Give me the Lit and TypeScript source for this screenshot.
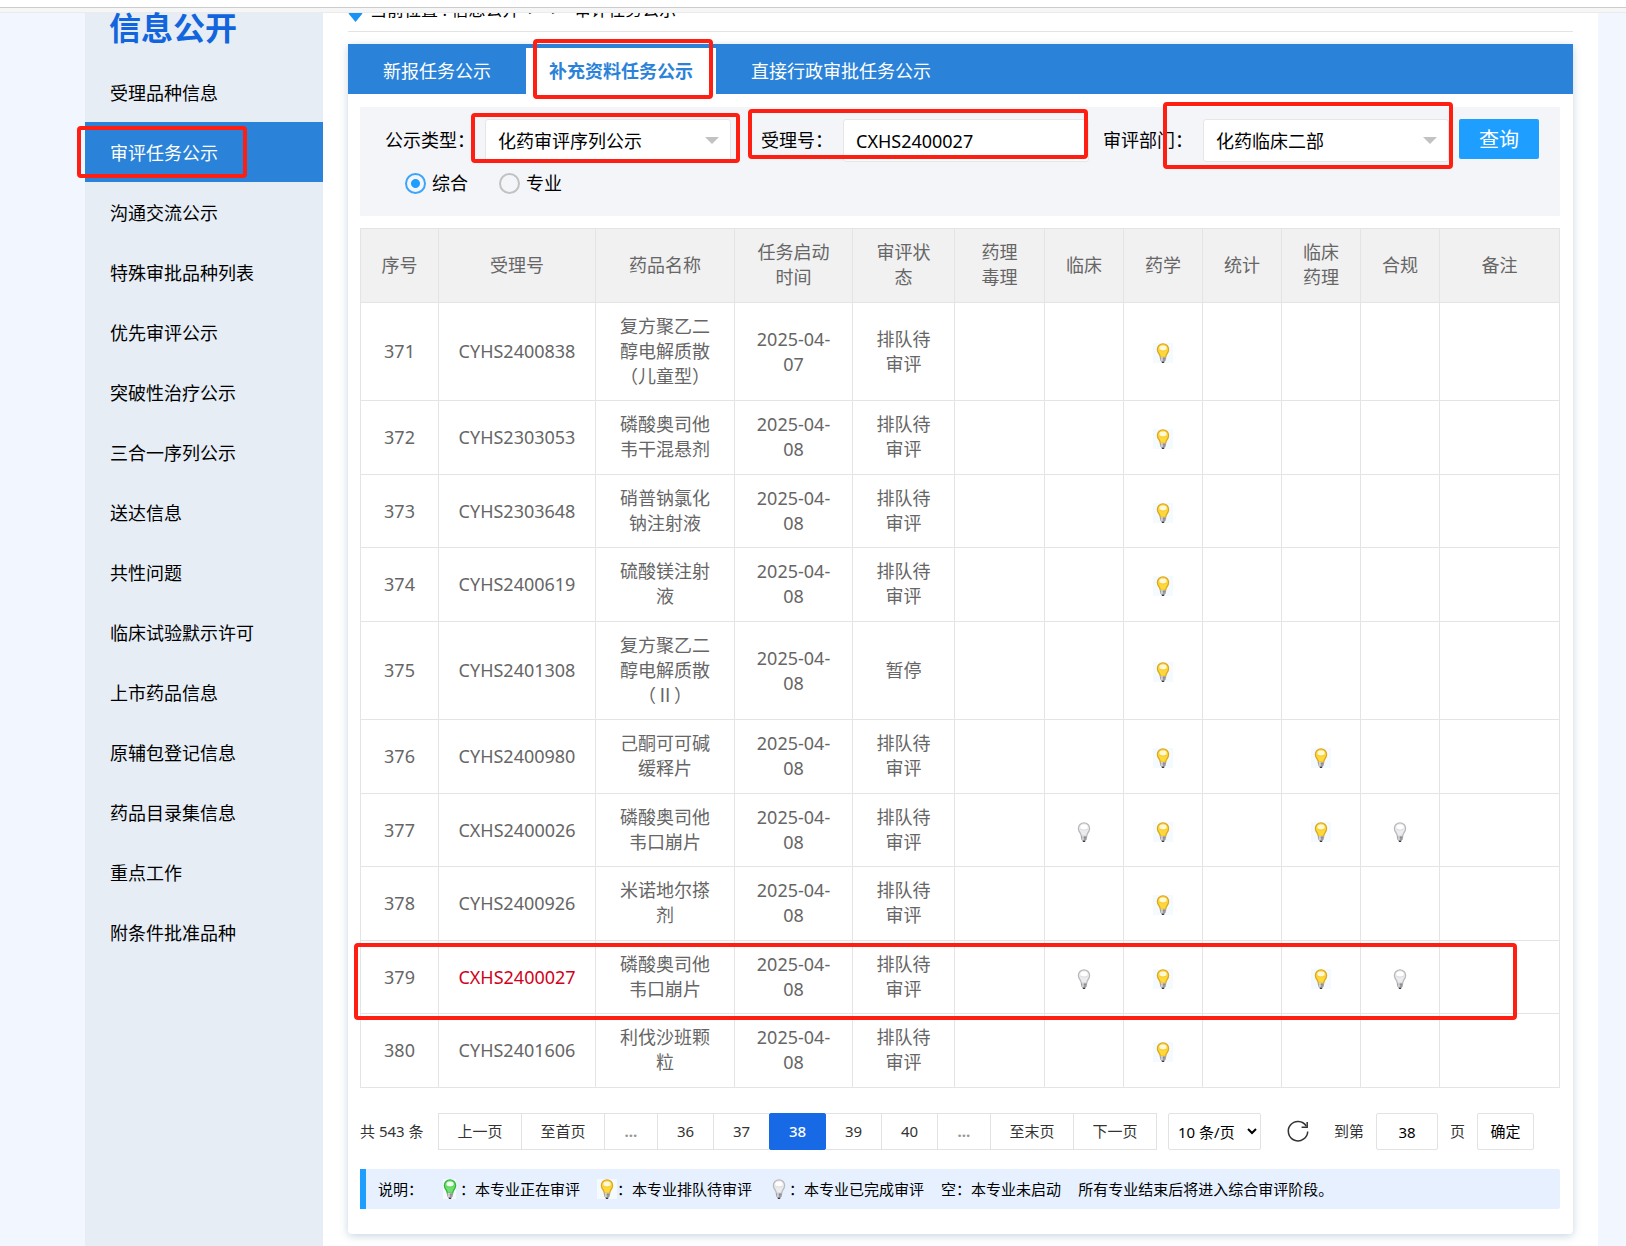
import { LitElement, html, svg, css, nothing } from "lit";
import { customElement, property } from "lit/decorators.js";
import { classMap } from "lit/directives/class-map.js";

type Lamp = "active" | "waiting" | "done" | "";

interface Task {
  no: number;
  code: string;
  name: string;
  date: string;
  status: string;
  lamps: Lamp[];
  marked?: boolean;
}

const MENU = [
  "受理品种信息", "审评任务公示", "沟通交流公示", "特殊审批品种列表", "优先审评公示",
  "突破性治疗公示", "三合一序列公示", "送达信息", "共性问题", "临床试验默示许可",
  "上市药品信息", "原辅包登记信息", "药品目录集信息", "重点工作", "附条件批准品种",
];
const CURRENT = "审评任务公示";

const HEADS = ["序号", "受理号", "药品名称", "任务启动时间", "审评状态", "药理毒理", "临床", "药学", "统计", "临床药理", "合规", "备注"];

// Lamp order: 药理毒理, 临床, 药学, 统计, 临床药理, 合规
const ONLY_CMC: Lamp[] = ["", "", "waiting", "", "", ""];
const FULL: Lamp[] = ["", "done", "waiting", "", "waiting", "done"];

const TASKS: Task[] = [
  { no: 371, code: "CYHS2400838", name: "复方聚乙二醇电解质散（儿童型）", date: "2025-04-07", status: "排队待审评", lamps: ONLY_CMC },
  { no: 372, code: "CYHS2303053", name: "磷酸奥司他韦干混悬剂", date: "2025-04-08", status: "排队待审评", lamps: ONLY_CMC },
  { no: 373, code: "CYHS2303648", name: "硝普钠氯化钠注射液", date: "2025-04-08", status: "排队待审评", lamps: ONLY_CMC },
  { no: 374, code: "CYHS2400619", name: "硫酸镁注射液", date: "2025-04-08", status: "排队待审评", lamps: ONLY_CMC },
  { no: 375, code: "CYHS2401308", name: "复方聚乙二醇电解质散（Ⅱ）", date: "2025-04-08", status: "暂停", lamps: ONLY_CMC },
  { no: 376, code: "CYHS2400980", name: "己酮可可碱缓释片", date: "2025-04-08", status: "排队待审评", lamps: ["", "", "waiting", "", "waiting", ""] },
  { no: 377, code: "CXHS2400026", name: "磷酸奥司他韦口崩片", date: "2025-04-08", status: "排队待审评", lamps: FULL },
  { no: 378, code: "CYHS2400926", name: "米诺地尔搽剂", date: "2025-04-08", status: "排队待审评", lamps: ONLY_CMC },
  { no: 379, code: "CXHS2400027", name: "磷酸奥司他韦口崩片", date: "2025-04-08", status: "排队待审评", lamps: FULL, marked: true },
  { no: 380, code: "CYHS2401606", name: "利伐沙班颗粒", date: "2025-04-08", status: "排队待审评", lamps: ONLY_CMC },
];

const PALETTE: Record<string, [string, string, string]> = {
  active: ["#33b53a", "#6fe06f", "#eefff0"],
  waiting: ["#dda71f", "#ffd93a", "#fff8d8"],
  done: ["#b9b9bb", "#ececee", "#ffffff"],
};

@customElement("status-lamp")
class StatusLamp extends LitElement {
  @property() kind: Lamp = "waiting";

  static styles = css`
    :host { display: inline-block; width: 20px; height: 20px; }
    .lamp { display: block; width: 20px; height: 20px; }
  `;

  render() {
    const [edge, glow, shine] = PALETTE[this.kind] ?? PALETTE.waiting;
    const backdrop = this.kind === "done" ? nothing
      : this.kind === "active" ? svg`<rect x="3" width="13" height="20" fill="#f5faff"/>`
      : svg`<rect width="20" height="20" fill="#f5faff"/>`;
    return html`
      <svg class="lamp" viewBox="0 0 20 20" aria-hidden="true">
        ${backdrop}
        <path d="M10 .9a5.600 5.600 0 0 0-5.600 5.600c0 3.500 2.800 4.300 3 8h5.200c.2-3.700 3-4.500 3-8A5.600 5.600 0 0 0 10 .9z"
          fill=${glow} stroke=${edge} stroke-width="1.300"/>
        <ellipse cx="10" cy="5" rx="3.600" ry="2.400" fill=${shine}/>
        <path d="M6.400 7.400q3.600 1.500 7.200 0" fill="none" stroke=${edge} stroke-width=".6" opacity=".5"/>
        <path d="M7.300 14h5.400v3l-1 1.600H8.300l-1-1.600z" fill="#b0b0b4"/>
        <path d="M7.300 15.400h5.400M7.300 17h5.400" stroke="#77777c" stroke-width=".7"/>
        <path d="M8.300 14h1.300v4H8.300z" fill="#e4e4e8"/>
        <path d="M8.400 18.400h3.200l-.6 1.500H9z" fill="#3c3a38"/>
      </svg>`;
  }
}

@customElement("app-root")
class AppRoot extends LitElement {
  static styles = css`
    :host {
      display: block;
      font-family: "Noto Sans", "Noto Sans CJK SC", sans-serif;
      font-size: 18px;
      line-height: 25px;
      color: #000;
    }
    * { box-sizing: border-box; }
    a { color: inherit; text-decoration: none; }
    button, input, select { font: inherit; color: inherit; margin: 0; }
    ul { list-style: none; margin: 0; padding: 0; }

    .screen { display: flex; flex-direction: column; min-height: 100vh; background: #f2f6ff; }
    .chrome { height: 8px; background: #fff; border-bottom: 1px solid #ccc; }
    .chrome-edge { height: 5px; background: #f6f6f6; border-bottom: 1px solid #ebebeb; }
    .content { flex: 1; display: flex; padding: 0 28px 0 85px; }

    .sidebar { width: 238px; flex: none; background: #e6edf5; }
    .title { margin: 0; height: 49px; padding-left: 24px; font-size: 32px; line-height: 30px; font-weight: 700; color: #1265dc; }
    .menu-item { position: relative; }
    .menu-link { display: block; padding: 2px 0 0 25px; line-height: 58px; }
    .menu-link.current { background: #2a83d8; color: #fff; }

    .main { flex: 1; min-width: 0; background: #fff; padding: 0 25px 12px; }
    .crumbs { height: 19px; overflow: hidden; border-bottom: 1px solid #e4e4e4; }
    .crumb-line { display: flex; align-items: flex-start; gap: 7px; margin-top: -15px; font-size: 17px; line-height: 24px; white-space: pre; }
    .pin { width: 15px; height: 24px; flex: none; }

    .panel { margin-top: 12px; background: #fff; border-radius: 0 0 4px 4px; box-shadow: 0 2px 8px rgba(30, 90, 140, 0.25); }
    .tabs { display: flex; height: 50px; background: #2a83d8; color: #fff; }
    .tab { position: relative; border: 0; border-top: 4px solid #2a83d8; background: none; padding: 2px 35px; line-height: 42px; }
    .tab.on { background: #fff; color: #2a83d8; font-weight: 700; padding: 2px 23px; }
    .body { padding: 13px 13px 25px 12px; }

    .filters { background: #f4f5f9; padding: 12px 21px 20px 25px; }
    .filter-row { display: flex; align-items: center; }
    .group { position: relative; display: flex; align-items: center; flex: 346 1 0; min-width: 0; }
    .group.short { flex-grow: 328; margin-left: 30px; }
    .group.dept { margin-left: 14px; }
    .caption { width: 100px; flex: none; white-space: nowrap; }
    .short .caption { width: 82px; }
    .field { position: relative; flex: 1; min-width: 0; display: flex; }
    .box { appearance: none; width: 100%; height: 43px; border: 1px solid #e6e6e6; border-radius: 3px; background: #fff; padding: 2px 12px 0; outline: 0; }
    input.box { padding: 0 12px; }
    .field.pick::after {
      content: ""; position: absolute; right: 12px; top: 18px;
      border: 7px solid transparent; border-top-color: #c2c2c2; border-bottom: 0;
      pointer-events: none;
    }
    .search { width: 80px; height: 40px; margin: 0 0 3px 10px; border: 0; border-radius: 2px; background: #1e9fff; color: #fff; font-size: 20px; padding: 0; flex: none; }
    .modes { display: flex; gap: 31px; padding: 9px 0 0 20px; }
    .mode { display: flex; align-items: center; gap: 6px; }
    .radio { appearance: none; width: 21px; height: 21px; border: 2px solid #c2c2c2; border-radius: 50%; background: #fff0; }
    .radio:checked { border-color: #3aa5fb; background: radial-gradient(circle, #1e9fff 4px, transparent 5px); }

    .tasks { width: 100%; margin-top: 12px; table-layout: fixed; border-collapse: separate; border-spacing: 0; border-left: 1px solid #e4e4e4; border-top: 1px solid #e4e4e4; color: #666; }
    .tasks th, .tasks td { padding: 11px 20px; border-right: 1px solid #e4e4e4; border-bottom: 1px solid #e4e4e4; text-align: center; font-weight: 400; }
    .tasks th { background: #f1f1f1; padding-bottom: 12px; }
    .tasks tr:nth-child(even) td { padding-bottom: 12px; }
    .tasks .tight { padding-left: 4px; padding-right: 4px; }
    .tasks .red { color: #d0021b; }
    .c-no { width: 78px; }
    .c-s { width: 79px; }
    .c-code { width: 157px; }
    .c-name { width: 139px; }
    .c-date { width: 118px; }
    .c-state { width: 102px; }
    .c-tox { width: 90px; }
    .c-note { width: 120px; }
    status-lamp { vertical-align: middle; }

    .pager { display: flex; align-items: center; margin-top: 25px; font-size: 15px; color: #333; }
    .total { width: 78px; white-space: nowrap; }
    .pages { display: flex; }
    .page { height: 37px; border: 1px solid #e2e2e2; margin-right: -1px; background: #fff; width: 57px; padding: 0; }
    .page.word { width: 84px; }
    .page.dots { width: 54px; color: #999; font-weight: 700; }
    .page.on { position: relative; background: #1769e6; border-color: #1769e6; color: #fff; border-radius: 2px; font-weight: 500; }
    .size { height: 37px; width: 93px; margin-left: 12px; padding: 0 0 0 5px; border: 1px solid #e2e2e2; border-radius: 2px; background: #fff; color: #000; }
    .reload { margin-left: 25px; width: 24px; height: 24px; padding: 0; border: 0; background: none; }
    .reload-icon { display: block; width: 24px; height: 24px; }
    .jump { display: flex; align-items: center; gap: 12px; margin-left: 24px; }
    .jump-input, .jump-go { height: 37px; border: 1px solid #e2e2e2; border-radius: 2px; background: #fff; color: #000; text-align: center; padding: 0; }
    .jump-input { width: 62px; }
    .jump-go { width: 57px; }

    .legend { display: flex; align-items: center; gap: 17px; height: 40px; margin-top: 19px; padding-left: 12px; border-left: 6px solid #1e9fff; border-radius: 0 2px 2px 0; background: #e6f0ff; font-size: 15px; white-space: nowrap; }
    .legend-item { display: flex; align-items: center; }

    .mark { position: absolute; border: 4px solid #ff1e12; border-radius: 4px; pointer-events: none; z-index: 2; }
    .mark-menu { left: -8px; top: 4px; width: 170px; height: 52px; }
    .mark-tab { left: 7px; right: 3px; top: -9px; height: 60px; }
    .mark-type { left: 86px; right: -9px; top: -6px; height: 50px; }
    .mark-code { left: -13px; right: 1px; top: -10px; height: 50px; }
    .mark-dept { left: 60px; right: -4px; top: -17px; height: 67px; }
    .row-anchor { position: relative; }
    .mark-row { left: -7px; right: 43px; top: 2px; height: 77px; }
  `;

  private lampCell(kind: Lamp) {
    return html`<td class="tight">${kind ? html`<status-lamp .kind=${kind}></status-lamp>` : nothing}</td>`;
  }

  private renderMenu() {
    return html`
      <nav class="sidebar">
        <h1 class="title">信息公开</h1>
        <ul>
          ${MENU.map((m) => html`
            <li class="menu-item">
              <a href="#" class=${classMap({ "menu-link": true, current: m === CURRENT })}>${m}</a>
              ${m === CURRENT ? html`<span class="mark mark-menu"></span>` : nothing}
            </li>`)}
        </ul>
      </nav>`;
  }

  private renderFilters() {
    return html`
      <form class="filters" @submit=${(e: Event) => e.preventDefault()}>
        <div class="filter-row">
          <div class="group">
            <label class="caption" for="type">公示类型：</label>
            <div class="field pick"><select class="box" id="type"><option>化药审评序列公示</option></select></div>
            <span class="mark mark-type"></span>
          </div>
          <div class="group short">
            <label class="caption" for="code">受理号：</label>
            <div class="field"><input class="box" id="code" type="text" value="CXHS2400027" /></div>
            <span class="mark mark-code"></span>
          </div>
          <div class="group dept">
            <label class="caption" for="dept">审评部门：</label>
            <div class="field pick"><select class="box" id="dept"><option>化药临床二部</option></select></div>
            <span class="mark mark-dept"></span>
          </div>
          <button class="search" type="submit">查询</button>
        </div>
        <div class="modes">
          <label class="mode"><input class="radio" type="radio" name="mode" checked />综合</label>
          <label class="mode"><input class="radio" type="radio" name="mode" />专业</label>
        </div>
      </form>`;
  }

  private renderTable() {
    const cols = ["no", "code", "name", "date", "state", "tox", "s", "s", "s", "s", "s", "note"];
    return html`
      <table class="tasks">
        <colgroup>${cols.map((c) => html`<col class=${"c-" + c} />`)}</colgroup>
        <thead><tr>${HEADS.map((h) => html`<th scope="col">${h}</th>`)}</tr></thead>
        <tbody>
          ${TASKS.map((t) => html`
            <tr class=${classMap({ "row-anchor": !!t.marked })}>
              <td class="tight">${t.no}${t.marked ? html`<span class="mark mark-row"></span>` : nothing}</td>
              <td class=${classMap({ tight: true, red: !!t.marked })}>${t.code}</td>
              <td>${t.name}</td>
              <td>${t.date}</td>
              <td>${t.status}</td>
              ${t.lamps.map((l) => this.lampCell(l))}
              <td></td>
            </tr>`)}
        </tbody>
      </table>`;
  }

  private renderPager() {
    const items = ["上一页", "至首页", "…", "36", "37", "38", "39", "40", "…", "至末页", "下一页"];
    return html`
      <div class="pager">
        <span class="total">共 543 条</span>
        <div class="pages">
          ${items.map((p) => html`<button type="button" class=${classMap({ page: true, word: p.length > 2, dots: p === "…", on: p === "38" })}>${p}</button>`)}
        </div>
        <select class="size" aria-label="每页条数"><option>10 条/页</option></select>
        <button type="button" class="reload" aria-label="刷新">
          <svg class="reload-icon" viewBox="0 0 24 24" fill="none" stroke="#333" stroke-width="1.5">
            <path d="M20.200 6A9.700 9.700 0 1 0 21.700 11.500"/>
            <path d="M21.200 2v5.200h-5.600"/>
          </svg>
        </button>
        <div class="jump">
          <label for="jump">到第</label>
          <input class="jump-input" id="jump" type="text" value="38" />
          <span>页</span>
          <button type="button" class="jump-go">确定</button>
        </div>
      </div>`;
  }

  private renderLegend() {
    const lamp = (kind: Lamp, text: string) =>
      html`<span class="legend-item"><status-lamp .kind=${kind}></status-lamp>：${text}</span>`;
    return html`
      <div class="legend">
        <span>说明：</span>
        ${lamp("active", "本专业正在审评")}
        ${lamp("waiting", "本专业排队待审评")}
        ${lamp("done", "本专业已完成审评")}
        <span>空：本专业未启动</span>
        <span>所有专业结束后将进入综合审评阶段。</span>
      </div>`;
  }

  render() {
    return html`
      <div class="screen">
        <div class="chrome"></div>
        <div class="chrome-edge"></div>
        <div class="content">
          ${this.renderMenu()}
          <main class="main">
            <div class="crumbs">
              <div class="crumb-line"><svg class="pin" viewBox="0 0 15 24" aria-hidden="true"><path d="M7.500 24 1.300 16.500A7.400 7.400 0 1 1 13.700 16.500z" fill="#1793f5"/></svg><span>当前位置 : 信息公开  &gt;   &gt;   审评任务公示</span></div>
            </div>
            <section class="panel">
              <div class="tabs">
                <button type="button" class="tab">新报任务公示</button>
                <button type="button" class="tab on">补充资料任务公示<span class="mark mark-tab"></span></button>
                <button type="button" class="tab">直接行政审批任务公示</button>
              </div>
              <div class="body">
                ${this.renderFilters()}
                ${this.renderTable()}
                ${this.renderPager()}
                ${this.renderLegend()}
              </div>
            </section>
          </main>
        </div>
      </div>`;
  }
}
